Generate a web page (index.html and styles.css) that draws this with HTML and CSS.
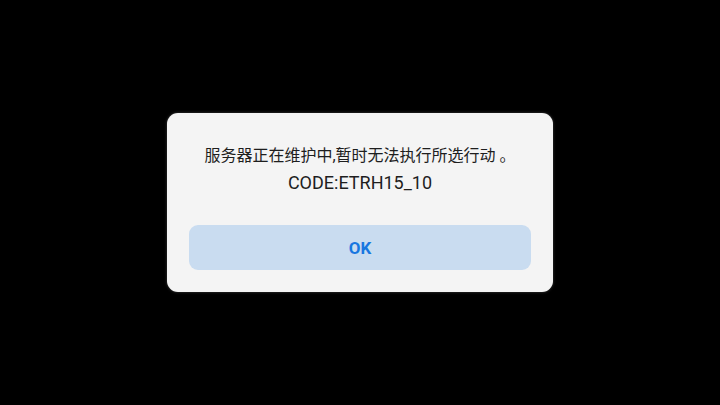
FILE: index.html
```html
<!DOCTYPE html>
<html lang="zh">
<head>
<meta charset="utf-8">
<link rel="stylesheet" href="styles.css">
</head>
<body>
<div class="screen">
  <div class="dialog">
    <div class="message">
      <p class="line cjk">服务器正在维护中,暂时无法执行所选行动 。</p>
      <p class="line code">CODE:ETRH15_10</p>
    </div>
    <button class="ok">OK</button>
  </div>
</div>
</body>
</html>
```
FILE: styles.css
```css
html, body {
  margin: 0;
  padding: 0;
  background: #000;
}
.screen {
  width: 720px;
  height: 405px;
  display: flex;
  align-items: center;
  justify-content: center;
}
.dialog {
  width: 386px;
  height: 179px;
  box-sizing: border-box;
  background: #f4f4f4;
  border-radius: 11px;
  padding: 29px 22px 22px;
  display: flex;
  flex-direction: column;
  box-shadow: 0 0 3px rgba(255,255,255,0.25);
}
.message {
  text-align: center;
  color: #1e1e1e;
}
.line {
  margin: 0;
  line-height: 27px;
  white-space: nowrap;
}
.cjk {
  font-family: "Roboto", "Noto Sans CJK SC", sans-serif;
  font-size: 16px;
}
.code {
  font-family: "Roboto", sans-serif;
  font-size: 18px;
}
.ok {
  margin-top: auto;
  height: 45px;
  border: none;
  border-radius: 9px;
  background: #c9dcf0;
  color: #1877e0;
  font-family: "Roboto", sans-serif;
  font-weight: 700;
  font-size: 17px;
  padding: 0;
}
```
